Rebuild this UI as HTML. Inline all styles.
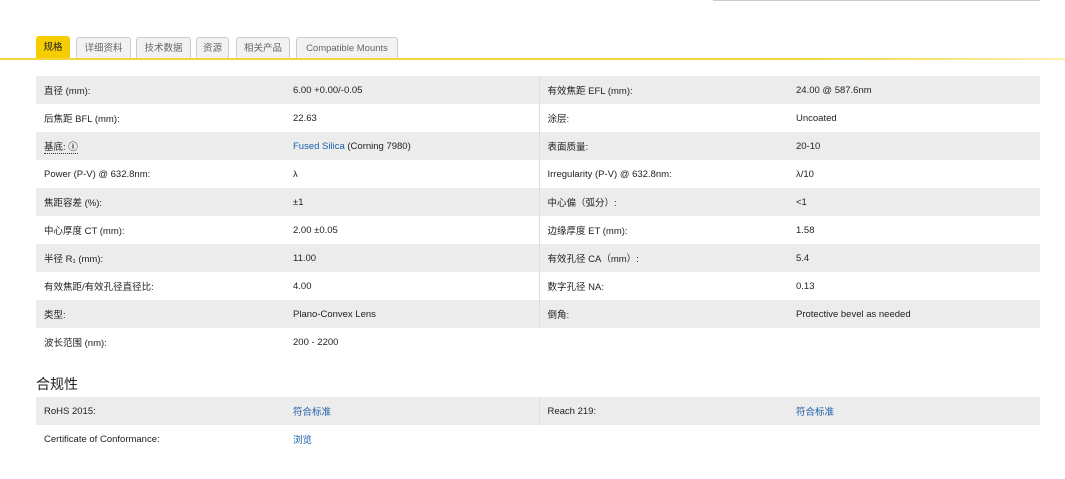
<!DOCTYPE html>
<html><head><meta charset="utf-8"><style>
body{margin:0;width:1065px;height:479px;background:#fff;font-family:"Liberation Sans","Noto Sans CJK SC",sans-serif;color:#222;font-size:9.5px;position:relative;overflow:hidden}
.topbar{position:absolute;left:713px;top:0;width:327px;height:1px;background:#ccc}
.tabs{position:absolute;left:36px;top:36px;height:23px}
.tab{position:absolute;top:1px;height:22px;border:1px solid #ccc;border-bottom:none;background:#f2f2f2;border-radius:3px 3px 0 0;color:#666;font-size:9.5px;line-height:22px;text-align:center;box-sizing:border-box}
.tab.act{background:#f5cd00;border-color:#f5cd00;color:#222;top:0;height:23px}
.line{position:absolute;left:0;top:58px;width:1065px;height:2px;background:linear-gradient(90deg,#f5d63a 0%,#f5d63a 75%,#fbf0b0 100%)}
table{position:absolute;left:36px;border-collapse:collapse;width:1004px}
td{height:28px;padding:0 0 0 8px;vertical-align:middle;box-sizing:border-box}
tr:nth-child(odd) td{background:#ececec}
td.c1{width:249px}td.c2{width:254px}td.c3{width:249px;border-left:1px solid #ddd}
a{color:#1a5ea8;text-decoration:none}
h3{position:absolute;left:36px;top:374px;margin:0;font-size:14px;font-weight:normal;color:#222}
</style></head><body>
<div class="topbar"></div>
<div class="tabs">
<div class="tab act" style="left:0;width:34px">规格</div>
<div class="tab" style="left:40px;width:55px">详细资料</div>
<div class="tab" style="left:100px;width:55px">技术数据</div>
<div class="tab" style="left:160px;width:33px">资源</div>
<div class="tab" style="left:200px;width:54px">相关产品</div>
<div class="tab" style="left:260px;width:102px">Compatible Mounts</div>
</div>
<div class="line"></div>
<table style="top:76px">
<tr><td class="c1">直径 (mm):</td><td class="c2">6.00 +0.00/-0.05</td><td class="c3">有效焦距 EFL (mm):</td><td>24.00 @ 587.6nm</td></tr>
<tr><td class="c1">后焦距 BFL (mm):</td><td class="c2">22.63</td><td class="c3">涂层:</td><td>Uncoated</td></tr>
<tr><td class="c1"><span style="border-bottom:1px dotted #333">基底: <b>ⓘ</b></span></td><td class="c2"><a>Fused Silica</a> (Corning 7980)</td><td class="c3">表面质量:</td><td>20-10</td></tr>
<tr><td class="c1">Power (P-V) @ 632.8nm:</td><td class="c2">λ</td><td class="c3">Irregularity (P-V) @ 632.8nm:</td><td>λ/10</td></tr>
<tr><td class="c1">焦距容差 (%):</td><td class="c2">±1</td><td class="c3">中心偏（弧分）:</td><td>&lt;1</td></tr>
<tr><td class="c1">中心厚度 CT (mm):</td><td class="c2">2.00 ±0.05</td><td class="c3">边缘厚度 ET (mm):</td><td>1.58</td></tr>
<tr><td class="c1">半径 R₁ (mm):</td><td class="c2">11.00</td><td class="c3">有效孔径 CA（mm）:</td><td>5.4</td></tr>
<tr><td class="c1">有效焦距/有效孔径直径比:</td><td class="c2">4.00</td><td class="c3">数字孔径 NA:</td><td>0.13</td></tr>
<tr><td class="c1">类型:</td><td class="c2">Plano-Convex Lens</td><td class="c3">倒角:</td><td>Protective bevel as needed</td></tr>
<tr><td class="c1">波长范围 (nm):</td><td class="c2">200 - 2200</td><td class="c3" style="border-left:none"></td><td></td></tr>
</table>
<h3>合规性</h3>
<table style="top:397px">
<tr><td class="c1">RoHS 2015:</td><td class="c2"><a>符合标准</a></td><td class="c3">Reach 219:</td><td><a>符合标准</a></td></tr>
<tr><td class="c1">Certificate of Conformance:</td><td class="c2"><a>浏览</a></td><td class="c3" style="border-left:none"></td><td></td></tr>
</table>
</body></html>
